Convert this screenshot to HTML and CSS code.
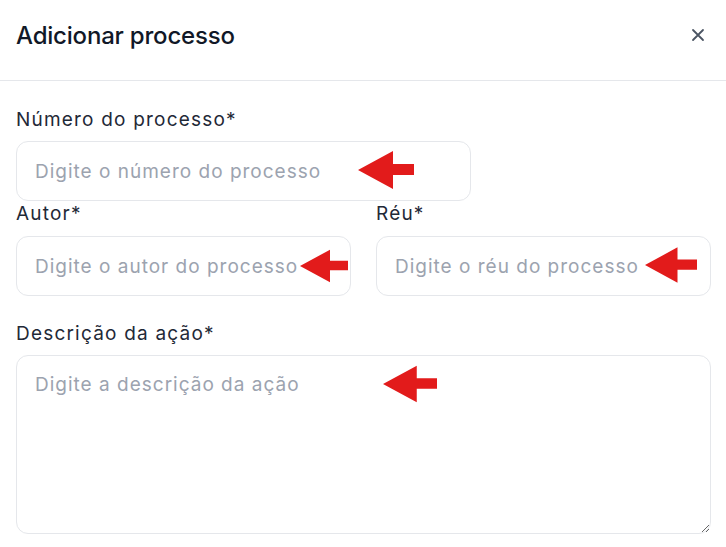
FILE: index.html
```html
<!DOCTYPE html>
<html lang="pt-BR">
<head>
<meta charset="utf-8">
<title>Adicionar processo</title>
<link rel="stylesheet" href="styles.css">
</head>
<body>
<div class="modal">
  <header class="modal-header">
    <h1 class="modal-title">Adicionar processo</h1>
    <button class="close-btn" aria-label="Fechar">
      <svg width="14" height="14" viewBox="0 0 14 14"><path d="M2 2 L12 12 M12 2 L2 12" stroke="#4b5563" stroke-width="1.8" stroke-linecap="round"/></svg>
    </button>
  </header>
  <form class="modal-body">
    <div class="field field-numero">
      <label class="label" for="numero">Número do processo*</label>
      <div class="control">
        <input id="numero" class="input" type="text" placeholder="Digite o número do processo">
        <svg class="arrow arrow-numero" width="56" height="38" viewBox="0 0 56 38"><polygon points="0,19 35,0 35,13 56,13 56,24 35,24 35,38" fill="#e21b1b"/></svg>
      </div>
    </div>
    <div class="row">
      <div class="field">
        <label class="label" for="autor">Autor*</label>
        <div class="control">
          <input id="autor" class="input" type="text" placeholder="Digite o autor do processo">
          <svg class="arrow arrow-autor" width="48" height="34" viewBox="0 0 56 38"><polygon points="0,19 35,0 35,13 56,13 56,24 35,24 35,38" fill="#e21b1b"/></svg>
        </div>
      </div>
      <div class="field">
        <label class="label" for="reu">Réu*</label>
        <div class="control">
          <input id="reu" class="input" type="text" placeholder="Digite o réu do processo">
          <svg class="arrow arrow-reu" width="52" height="36" viewBox="0 0 56 38"><polygon points="0,19 35,0 35,13 56,13 56,24 35,24 35,38" fill="#e21b1b"/></svg>
        </div>
      </div>
    </div>
    <div class="field">
      <label class="label" for="descricao">Descrição da ação*</label>
      <div class="control">
        <textarea id="descricao" class="input textarea" placeholder="Digite a descrição da ação"></textarea>
        <svg class="arrow arrow-desc" width="54" height="38" viewBox="0 0 56 38"><polygon points="0,19 35,0 35,13 56,13 56,24 35,24 35,38" fill="#e21b1b"/></svg>
      </div>
    </div>
  </form>
</div>
</body>
</html>
```
FILE: styles.css
```css
* { box-sizing: border-box; }
html, body { margin: 0; padding: 0; background: #ffffff; }
body {
  font-family: Inter, "Noto Sans", sans-serif;
  color: #1f2937;
  width: 726px;
  height: 547px;
  overflow: hidden;
}
.modal { width: 726px; }
.modal-header {
  height: 81px;
  display: flex;
  align-items: center;
  justify-content: space-between;
  padding: 0 18px 10px 16px;
  border-bottom: 1px solid #e5e7eb;
}
.modal-title {
  margin: 0;
  font-size: 24px;
  font-weight: 500;
  color: #111827;
  letter-spacing: -0.2px;
}
.close-btn {
  border: none;
  background: none;
  padding: 0;
  width: 20px;
  height: 20px;
  display: flex;
  align-items: center;
  justify-content: center;
  cursor: pointer;
}
.modal-body {
  padding: 27px 15px 0 16px;
  display: flex;
  flex-direction: column;
}
.field { display: flex; flex-direction: column; }
.label {
  font-size: 19px;
  font-weight: 400;
  letter-spacing: 1.2px;
  line-height: 24px;
  height: 24px;
  margin-bottom: 9px;
  color: #1f2937;
}
.row {
  display: grid;
  grid-template-columns: 335px 335px;
  column-gap: 25px;
  margin-top: 1px;
  margin-bottom: 26px;
}
.row .label { margin-bottom: 10px; }
.control { position: relative; }
.field-numero .control { width: 455px; }
.input {
  display: block;
  width: 100%;
  height: 60px;
  border: 1px solid #e5e7eb;
  border-radius: 12px;
  padding: 0 18px;
  font-family: Inter, "Noto Sans", sans-serif;
  font-size: 19px;
  letter-spacing: 1px;
  color: #111827;
  background: #fff;
  outline: none;
}
.input::placeholder { color: #9ca3af; }
.textarea {
  height: 179px;
  padding: 16px 18px;
  line-height: 26px;
  resize: vertical;
}
.arrow { position: absolute; }
.arrow-numero { left: 342px; top: 10px; }
.arrow-autor { left: 284px; top: 13px; }
.arrow-reu { left: 269px; top: 11px; }
.arrow-desc { left: 367px; top: 10px; }
```
